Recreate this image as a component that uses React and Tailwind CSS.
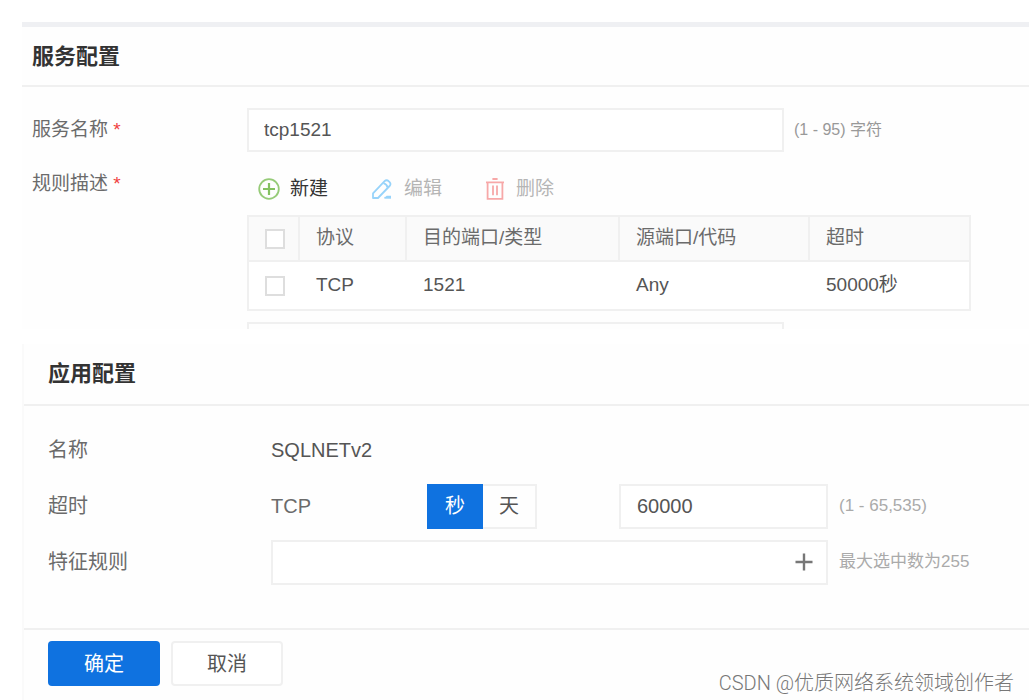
import React, { useState } from "react";

const rules = [{ protocol: "TCP", dest: "1521", source: "Any", timeout: "50000秒" }];

const PlusCircle = () => (
  <svg width="22" height="22" viewBox="0 0 22 22" fill="none" stroke="#96cb78" aria-hidden="true">
    <circle cx="11" cy="11" r="9.8" strokeWidth="1.8" />
    <path d="M11 5v12M5 11h12" stroke="#84c161" strokeWidth="2.2" />
  </svg>
);

const Pencil = () => (
  <svg width="20" height="20" viewBox="0 0 20 20" fill="none" stroke="#97d3fa" strokeWidth="1.8" strokeLinejoin="round" aria-hidden="true">
    <path d="M1 19v-4.6L12.6 2.2c1.2-1.3 2.8-1.3 4 0l1 1c1.2 1.2 1.2 2.6 0 3.8L6 19H1z" />
    <path d="M11.4 4.2c2.2.6 3.6 2 4.2 4.2" />
    <path d="M12.4 19l2.2-2.2H19V19z" fill="#97d3fa" stroke="none" />
    <path d="M12.4 18.8H19" />
  </svg>
);

const Trash = () => (
  <svg width="18" height="22" viewBox="0 0 18 22" fill="none" stroke="#f7a8a8" strokeWidth="1.8" aria-hidden="true">
    <path d="M6.4 1h5.2M0 4.4h18M1.6 4.4v16.4h14.8V4.4" />
    <path d="M7 7.6v9.6M11 7.6v9.6" />
  </svg>
);

const Check = ({ label }) => (
  <input
    type="checkbox"
    aria-label={label}
    className="block w-5 h-5 appearance-none bg-white border-2 border-[#dedede] checked:bg-[#0f72e0]"
  />
);

const App = () => {
  const [name, setName] = useState("tcp1521");
  const [timeout, setTimeoutValue] = useState("60000");
  const [unit, setUnit] = useState("秒");

  return (
    <div className="pt-[22px] pl-[22px] bg-white font-['Liberation_Sans','Noto_Sans_CJK_SC',sans-serif] text-[#6b6b6b]">
      <section className="border-t-[5px] border-[#eff0f3] bg-[#fefefe]">
        <h2 className="h-[60px] pl-[10px] flex items-center border-b-2 border-[#f0f0f0] text-[22px] font-bold text-[#333]">
          服务配置
        </h2>

        <div className="pl-[10px] pt-[21px] text-[19px]">
          <div className="flex items-center">
            <label htmlFor="name" className="w-[215px] shrink-0">
              服务名称 <span className="text-[#f04040]">*</span>
            </label>
            <input
              id="name"
              value={name}
              onChange={(e) => setName(e.target.value)}
              className="w-[537px] h-11 px-[15px] bg-white border-2 border-[#f0f0f0] text-[#555] focus:outline-none"
            />
            <span className="ml-[10px] text-base text-[#999]">(1 - 95) 字符</span>
          </div>

          <div className="flex">
            <div className="w-[215px] shrink-0 pt-[18px]">
              规则描述 <span className="text-[#f04040]">*</span>
            </div>
            <div className="flex-1 pt-[21px] pr-[58px]">
              <div className="flex items-center gap-11 h-8 pl-[11px] mb-[10px]">
                <button className="flex items-center gap-[10px] text-[#333]">
                  <PlusCircle />新建
                </button>
                <button className="flex items-center gap-3 text-[#b5b5b5]" disabled>
                  <Pencil />编辑
                </button>
                <button className="flex items-center gap-3 text-[#b5b5b5]" disabled>
                  <Trash />删除
                </button>
              </div>

              <table className="w-full table-fixed border-collapse border-2 border-[#f0f0f0] bg-white text-left">
                <thead>
                  <tr className="h-[45px] bg-[#fafafa] [&>th]:border-2 [&>th]:border-[#f0f0f0] [&>th]:px-4 [&>th]:font-normal">
                    <th className="w-[51px]"><Check label="全选" /></th>
                    <th className="w-[107px]">协议</th>
                    <th className="w-[213px]">目的端口/类型</th>
                    <th className="w-[190px]">源端口/代码</th>
                    <th>超时</th>
                  </tr>
                </thead>
                <tbody className="text-[#555]">
                  {rules.map((rule) => (
                    <tr key={rule.dest} className="h-[49px] [&>td]:px-[17px] [&>td:first-child]:px-4">
                      <td><Check label={rule.dest} /></td>
                      <td>{rule.protocol}</td>
                      <td>{rule.dest}</td>
                      <td>{rule.source}</td>
                      <td>{rule.timeout}</td>
                    </tr>
                  ))}
                </tbody>
              </table>
              <div className="w-[537px] h-[7px] mt-[11px] border-2 border-b-0 border-[#f0f0f0]" />
            </div>
          </div>
        </div>
      </section>

      <section className="mt-[15px] border-l-2 border-[#fafafa] bg-[#fefefe] text-xl">
        <h2 className="h-[62px] pl-6 flex items-center border-b-2 border-[#f0f0f0] text-[22px] font-bold text-[#333]">
          应用配置
        </h2>

        <div className="pl-6 pt-[22px] pb-11 flex flex-col gap-3">
          <div className="flex items-center h-11">
            <div className="w-[223px] shrink-0">名称</div>
            <div className="text-[#555]">SQLNETv2</div>
          </div>

          <div className="flex items-center h-11">
            <label htmlFor="timeout" className="w-[223px] shrink-0">超时</label>
            <div className="w-[156px]">TCP</div>
            <div className="flex w-[192px]">
              <button
                onClick={() => setUnit("秒")}
                className={`w-14 h-[45px] ${unit === "秒" ? "bg-[#0f72e0] text-white" : "border-2 border-[#f0f0f0]"}`}
              >
                秒
              </button>
              <button
                onClick={() => setUnit("天")}
                className={`w-[54px] h-[45px] ${unit === "天" ? "bg-[#0f72e0] text-white" : "border-2 border-l-0 border-[#f0f0f0] text-[#555]"}`}
              >
                天
              </button>
            </div>
            <input
              id="timeout"
              value={timeout}
              onChange={(e) => setTimeoutValue(e.target.value)}
              className="w-[209px] h-[45px] px-4 bg-white border-2 border-[#f0f0f0] text-[#555] focus:outline-none"
            />
            <span className="ml-[11px] text-[17px] text-[#aaa]">(1 - 65,535)</span>
          </div>

          <div className="flex items-center h-11">
            <div className="w-[223px] shrink-0">特征规则</div>
            <div className="flex items-center justify-end w-[557px] h-[45px] pr-[13px] bg-white border-2 border-[#f0f0f0]">
              <button aria-label="添加">
                <svg width="18" height="18" viewBox="0 0 18 18" stroke="#777" strokeWidth="2.4" className="block">
                  <path d="M9 .5v17M.5 9h17" />
                </svg>
              </button>
            </div>
            <span className="ml-[11px] text-[17px] text-[#aaa]">最大选中数为255</span>
          </div>
        </div>

        <div className="flex items-start gap-[11px] h-[73px] pt-[11px] pl-6 pr-[15px] border-t-2 border-[#f0f0f0]">
          <button className="w-28 h-[45px] rounded bg-[#0f72e0] text-white">确定</button>
          <button className="w-28 h-[45px] rounded border-2 border-[#f0f0f0] bg-white text-[#555]">取消</button>
          <span className="ml-auto self-end pb-1 font-[Roboto,'Noto_Sans_CJK_SC',sans-serif] font-light leading-7 text-[#777]">
            CSDN @优质网络系统领域创作者
          </span>
        </div>
      </section>
    </div>
  );
};

export default App;
